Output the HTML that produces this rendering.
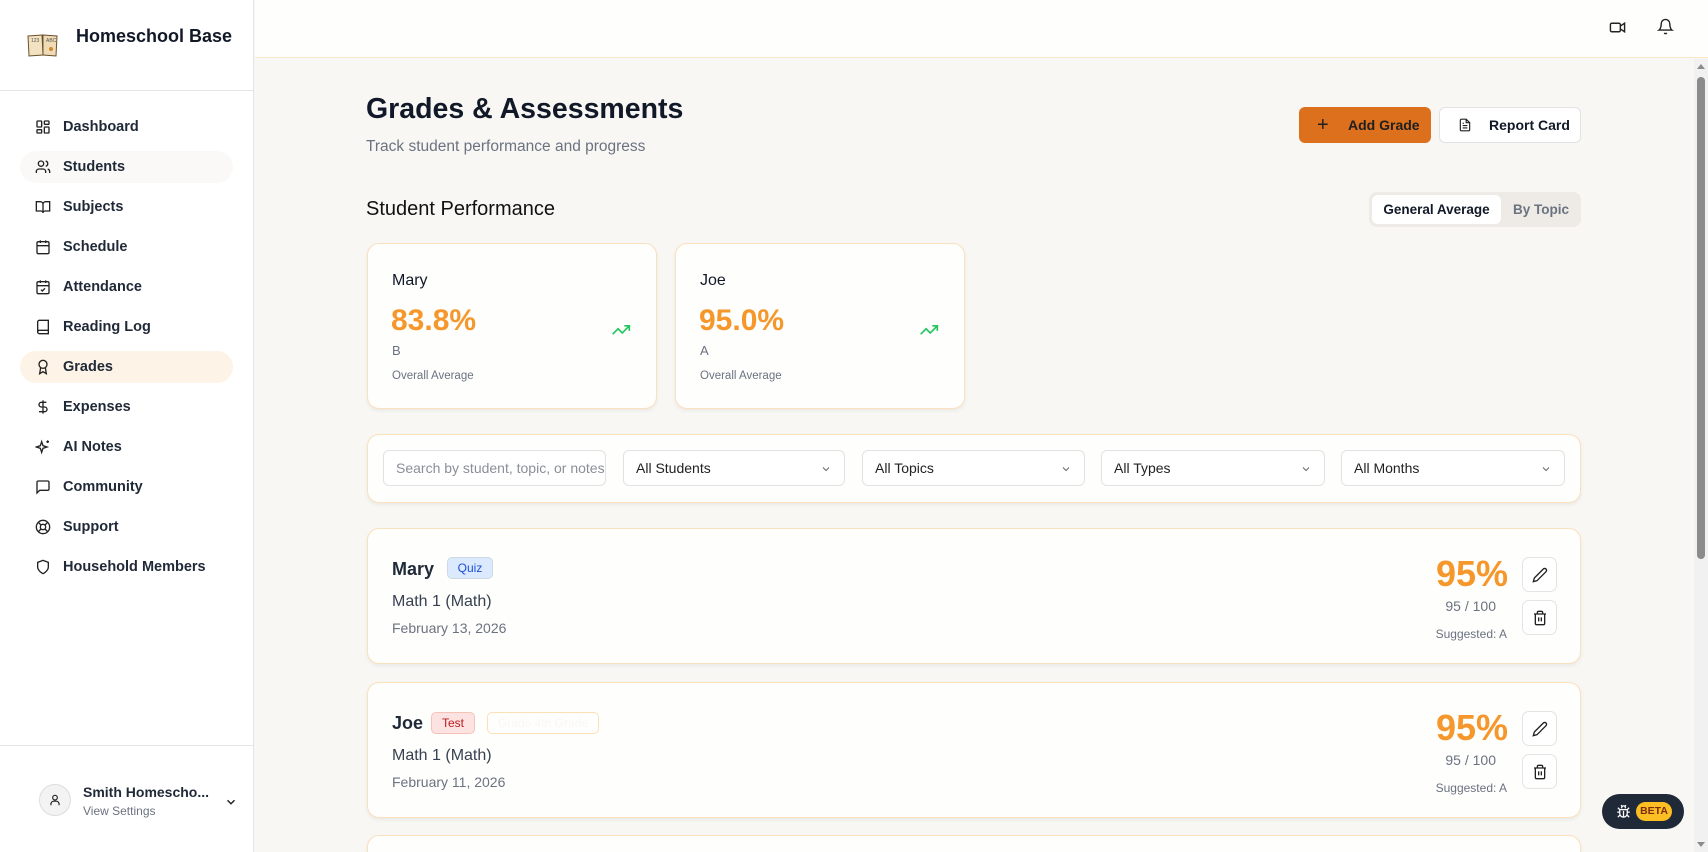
<!DOCTYPE html>
<html style="width:1708px;height:852px;overflow:hidden"><head><meta charset="utf-8"><style>
*{box-sizing:border-box;margin:0;padding:0}
body{width:1708px;height:852px;overflow:hidden;font-family:"Liberation Sans",sans-serif;background:#f8f7f4;color:#111827}
#w{position:relative;width:1708px;height:852px;overflow:hidden}
.abs{position:absolute}
.sb{left:0;top:0;width:254px;height:852px;background:#fff;border-right:1px solid #e5e5e5}
.nav{position:absolute;left:20px;width:213px;height:32px;border-radius:16px;display:flex;align-items:center;font-size:14.5px;font-weight:bold;color:#1f2937}
.nav svg{position:absolute;left:15px;width:16px;height:16px}
.nav span{position:absolute;left:43px}
.card{position:absolute;background:#fefefc;border:1px solid #fbe0bd;border-radius:12px;box-shadow:0 2px 4px rgba(0,0,0,.06)}
.sel{position:absolute;top:450px;height:36px;border:1px solid #e2e2e2;border-radius:6px;background:#fff;font-size:14px;color:#222;padding-left:12px;line-height:34px}
.sel svg{position:absolute;right:12px;top:12px}
.ib{position:absolute;width:35px;height:35px;border:1px solid #e4e4e4;border-radius:7px;background:#fff}
.ib svg{position:absolute;left:9px;top:9px}
</style></head><body><div id="w">
<div class="abs sb">
  <svg class="abs" style="left:26px;top:32px" width="34" height="26" viewBox="0 0 34 26"><path d="M2 4 L16 3 L17 23 L3 24Z" fill="#f3e2c0" stroke="#6b4f2a"/><path d="M17 3 L31 4 L30 24 L17 23Z" fill="#efdcb6" stroke="#6b4f2a"/><text x="5" y="10" font-size="5" fill="#555">123</text><text x="20" y="10" font-size="5" fill="#555">ABC</text><circle cx="25" cy="17" r="2" fill="#d08a2a"/></svg>
  <div class="abs" style="left:76px;top:26px;font-size:18px;font-weight:bold">Homeschool Base</div>
  <div class="abs" style="left:0;top:90px;width:254px;border-top:1px solid #e5e5e5"></div>
  <div class="nav" style="top:111px"><svg viewBox="0 0 24 24" fill="none" stroke="#222" stroke-width="2"><rect x="3" y="3" width="7" height="9" rx="1"/><rect x="14" y="3" width="7" height="5" rx="1"/><rect x="14" y="12" width="7" height="9" rx="1"/><rect x="3" y="16" width="7" height="5" rx="1"/></svg><span>Dashboard</span></div>
  <div class="nav" style="top:151px;background:#faf9f7"><svg viewBox="0 0 24 24" fill="none" stroke="#222" stroke-width="2"><circle cx="9" cy="7" r="4"/><path d="M2 21v-2a4 4 0 0 1 4-4h6a4 4 0 0 1 4 4v2M16 3.1a4 4 0 0 1 0 7.8M22 21v-2a4 4 0 0 0-3-3.9"/></svg><span>Students</span></div>
  <div class="nav" style="top:191px"><svg viewBox="0 0 24 24" fill="none" stroke="#222" stroke-width="2"><path d="M2 4h6a4 4 0 0 1 4 4v13a3 3 0 0 0-3-3H2zM22 4h-6a4 4 0 0 0-4 4v13a3 3 0 0 1 3-3h7z"/></svg><span>Subjects</span></div>
  <div class="nav" style="top:231px"><svg viewBox="0 0 24 24" fill="none" stroke="#222" stroke-width="2"><rect x="3" y="4" width="18" height="18" rx="2"/><path d="M16 2v4M8 2v4M3 10h18"/></svg><span>Schedule</span></div>
  <div class="nav" style="top:271px"><svg viewBox="0 0 24 24" fill="none" stroke="#222" stroke-width="2"><rect x="3" y="4" width="18" height="18" rx="2"/><path d="M16 2v4M8 2v4M3 10h18M9 16l2 2 4-4"/></svg><span>Attendance</span></div>
  <div class="nav" style="top:311px"><svg viewBox="0 0 24 24" fill="none" stroke="#222" stroke-width="2"><path d="M4 19.5v-15A2.5 2.5 0 0 1 6.5 2H20v20H6.5a2.5 2.5 0 0 1 0-5H20"/></svg><span>Reading Log</span></div>
  <div class="nav" style="top:351px;background:#fdf3e7"><svg viewBox="0 0 24 24" fill="none" stroke="#222" stroke-width="2"><circle cx="12" cy="8" r="6"/><path d="M15.5 13l1.5 9-5-3-5 3 1.5-9"/></svg><span>Grades</span></div>
  <div class="nav" style="top:391px"><svg viewBox="0 0 24 24" fill="none" stroke="#222" stroke-width="2"><path d="M12 2v20M17 5H9.5a3.5 3.5 0 0 0 0 7h5a3.5 3.5 0 0 1 0 7H6"/></svg><span>Expenses</span></div>
  <div class="nav" style="top:431px"><svg viewBox="0 0 24 24" fill="none" stroke="#222" stroke-width="2"><path d="M10 4l2 6 6 2-6 2-2 6-2-6-6-2 6-2zM19 2v4M17 4h4"/></svg><span>AI Notes</span></div>
  <div class="nav" style="top:471px"><svg viewBox="0 0 24 24" fill="none" stroke="#222" stroke-width="2"><path d="M21 15a2 2 0 0 1-2 2H7l-4 4V5a2 2 0 0 1 2-2h14a2 2 0 0 1 2 2z"/></svg><span>Community</span></div>
  <div class="nav" style="top:511px"><svg viewBox="0 0 24 24" fill="none" stroke="#222" stroke-width="2"><circle cx="12" cy="12" r="10"/><circle cx="12" cy="12" r="4"/><path d="M4.9 4.9l4.3 4.3M14.8 14.8l4.3 4.3M14.8 9.2l4.3-4.3M4.9 19.1l4.3-4.3"/></svg><span>Support</span></div>
  <div class="nav" style="top:551px"><svg viewBox="0 0 24 24" fill="none" stroke="#222" stroke-width="2"><path d="M12 22s8-4 8-10V5l-8-3-8 3v7c0 6 8 10 8 10z"/></svg><span>Household Members</span></div>
  <div class="abs" style="left:0;top:745px;width:254px;border-top:1px solid #e5e5e5"></div>
  <div class="abs" style="left:39px;top:784px;width:32px;height:32px;border-radius:50%;background:#f3f3f3;border:1px solid #ddd"><svg style="position:absolute;left:8px;top:8px" width="14" height="14" viewBox="0 0 24 24" fill="none" stroke="#222" stroke-width="2"><circle cx="12" cy="8" r="4"/><path d="M5 21v-2a5 5 0 0 1 5-5h4a5 5 0 0 1 5 5v2"/></svg></div>
  <div class="abs" style="left:83px;top:784px;font-size:14px;font-weight:bold;color:#1f2937">Smith Homescho...</div>
  <div class="abs" style="left:83px;top:804px;font-size:12px;color:#6b7280">View Settings</div>
  <svg class="abs" style="left:224px;top:795px" width="14" height="14" viewBox="0 0 24 24" fill="none" stroke="#222" stroke-width="2.5"><path d="M6 9l6 6 6-6"/></svg>
</div>
<div class="abs" style="left:255px;top:0;width:1453px;height:58px;background:#fefefd;border-bottom:1px solid #fde6c8"></div>
<svg class="abs" style="left:1609px;top:19px" width="17" height="17" viewBox="0 0 24 24" fill="none" stroke="#222" stroke-width="2"><rect x="2" y="6" width="14" height="12" rx="2"/><path d="M16 10l6-4v12l-6-4"/></svg>
<svg class="abs" style="left:1657px;top:18px" width="17" height="17" viewBox="0 0 24 24" fill="none" stroke="#222" stroke-width="2"><path d="M6 8a6 6 0 0 1 12 0c0 7 3 9 3 9H3s3-2 3-9M10.3 21a1.9 1.9 0 0 0 3.4 0"/></svg>

<div class="abs" style="left:366px;top:93px;font-size:28.5px;font-weight:bold">Grades &amp; Assessments</div>
<div class="abs" style="left:366px;top:138px;font-size:15.5px;color:#6b7280">Track student performance and progress</div>
<div class="abs" style="left:1299px;top:107px;width:132px;height:36px;background:#dc701d;border-radius:6px;font-size:14px;font-weight:bold;color:#1f1f1f;line-height:36px"><span style="position:absolute;left:18px;font-size:20px;font-weight:normal">+</span><span style="position:absolute;left:49px">Add Grade</span></div>
<div class="abs" style="left:1439px;top:107px;width:142px;height:36px;background:#fff;border:1px solid #e2e2e2;border-radius:6px;font-size:14px;font-weight:bold;line-height:34px"><svg style="position:absolute;left:18px;top:10px" width="14" height="14" viewBox="0 0 24 24" fill="none" stroke="#222" stroke-width="2"><path d="M14 2H6a2 2 0 0 0-2 2v16a2 2 0 0 0 2 2h12a2 2 0 0 0 2-2V8zM14 2v6h6M8 13h8M8 17h8M8 9h2"/></svg><span style="position:absolute;left:49px">Report Card</span></div>
<div class="abs" style="left:366px;top:198px;font-size:20px;color:#111">Student Performance</div>
<div class="abs" style="left:1369px;top:192px;width:212px;height:35px;background:#eeebe6;border-radius:8px"><div class="abs" style="left:3px;top:3px;width:129px;height:29px;background:#fff;border-radius:6px;font-size:13.5px;font-weight:bold;text-align:center;line-height:29px">General Average</div><div class="abs" style="left:144px;top:3px;line-height:29px;font-size:13.5px;font-weight:bold;color:#6b7280">By Topic</div></div>

<div class="card" style="left:367px;top:243px;width:290px;height:166px">
  <div class="abs" style="left:24px;top:28px;font-size:16px">Mary</div>
  <div class="abs" style="left:23px;top:60px;font-size:30px;font-weight:bold;color:#f6972c">83.8%</div>
  <div class="abs" style="left:24px;top:99px;font-size:13px;color:#6b7280">B</div>
  <div class="abs" style="left:24px;top:126px;font-size:11.5px;color:#6b7280">Overall Average</div>
  <svg class="abs" style="left:241px;top:76px" width="24" height="20" viewBox="0 0 24 24" fill="none" stroke="#22c55e" stroke-width="2"><path d="M22 7l-8.5 8.5-5-5L2 17M16 7h6v6"/></svg>
</div>
<div class="card" style="left:675px;top:243px;width:290px;height:166px">
  <div class="abs" style="left:24px;top:28px;font-size:16px">Joe</div>
  <div class="abs" style="left:23px;top:60px;font-size:30px;font-weight:bold;color:#f6972c">95.0%</div>
  <div class="abs" style="left:24px;top:99px;font-size:13px;color:#6b7280">A</div>
  <div class="abs" style="left:24px;top:126px;font-size:11.5px;color:#6b7280">Overall Average</div>
  <svg class="abs" style="left:241px;top:76px" width="24" height="20" viewBox="0 0 24 24" fill="none" stroke="#22c55e" stroke-width="2"><path d="M22 7l-8.5 8.5-5-5L2 17M16 7h6v6"/></svg>
</div>

<div class="card" style="left:367px;top:434px;width:1214px;height:69px"></div>
<div class="sel" style="left:383px;width:223px;color:#8a8f98;overflow:hidden;white-space:nowrap">Search by student, topic, or notes</div>
<div class="sel" style="left:623px;width:222px">All Students<svg width="12" height="12" viewBox="0 0 24 24" fill="none" stroke="#666" stroke-width="2"><path d="M6 9l6 6 6-6"/></svg></div>
<div class="sel" style="left:862px;width:223px">All Topics<svg width="12" height="12" viewBox="0 0 24 24" fill="none" stroke="#666" stroke-width="2"><path d="M6 9l6 6 6-6"/></svg></div>
<div class="sel" style="left:1101px;width:224px">All Types<svg width="12" height="12" viewBox="0 0 24 24" fill="none" stroke="#666" stroke-width="2"><path d="M6 9l6 6 6-6"/></svg></div>
<div class="sel" style="left:1341px;width:224px">All Months<svg width="12" height="12" viewBox="0 0 24 24" fill="none" stroke="#666" stroke-width="2"><path d="M6 9l6 6 6-6"/></svg></div>

<div class="card" style="left:367px;top:528px;width:1214px;height:136px">
  <div class="abs" style="left:24px;top:30px;font-size:18px;font-weight:bold;color:#1f2937">Mary</div>
  <div class="abs" style="left:79px;top:28px;width:46px;height:22px;background:#dbeafe;border:1px solid #cfd8e0;border-radius:5px;font-size:12px;color:#1d4ed8;text-align:center;line-height:20px">Quiz</div>
  <div class="abs" style="left:24px;top:64px;font-size:16px;color:#374151">Math 1 (Math)</div>
  <div class="abs" style="left:24px;top:91px;font-size:14px;color:#6b7280">February 13, 2026</div>
  <div class="abs" style="right:72px;top:24px;font-size:36px;font-weight:bold;color:#f6972c">95%</div>
  <div class="abs" style="right:84px;top:69px;font-size:14px;color:#6b7280">95 / 100</div>
  <div class="abs" style="right:73px;top:98px;font-size:12px;color:#6b7280">Suggested: A</div>
  <div class="ib" style="left:1154px;top:28px"><svg width="16" height="16" viewBox="0 0 24 24" fill="none" stroke="#222" stroke-width="2"><path d="M17 3a2.8 2.8 0 0 1 4 4L7.5 20.5 2 22l1.5-5.5z"/></svg></div>
  <div class="ib" style="left:1154px;top:71px"><svg width="16" height="16" viewBox="0 0 24 24" fill="none" stroke="#222" stroke-width="2"><path d="M3 6h18M19 6v14a2 2 0 0 1-2 2H7a2 2 0 0 1-2-2V6M8 6V4a2 2 0 0 1 2-2h4a2 2 0 0 1 2 2v2M10 11v6M14 11v6"/></svg></div>
</div>
<div class="card" style="left:367px;top:682px;width:1214px;height:136px">
  <div class="abs" style="left:24px;top:30px;font-size:18px;font-weight:bold;color:#1f2937">Joe</div>
  <div class="abs" style="left:63px;top:29px;width:44px;height:22px;background:#fde2e2;border:1px solid #f5c2b8;border-radius:5px;font-size:12px;color:#b91c1c;text-align:center;line-height:20px">Test</div>
  <div class="abs" style="left:119px;top:29px;width:112px;height:22px;border:1px solid #fde0b8;border-radius:5px;font-size:12px;color:#f9f7f2;text-align:center;line-height:20px">Grade 4th Grade</div>
  <div class="abs" style="left:24px;top:64px;font-size:16px;color:#374151">Math 1 (Math)</div>
  <div class="abs" style="left:24px;top:91px;font-size:14px;color:#6b7280">February 11, 2026</div>
  <div class="abs" style="right:72px;top:24px;font-size:36px;font-weight:bold;color:#f6972c">95%</div>
  <div class="abs" style="right:84px;top:69px;font-size:14px;color:#6b7280">95 / 100</div>
  <div class="abs" style="right:73px;top:98px;font-size:12px;color:#6b7280">Suggested: A</div>
  <div class="ib" style="left:1154px;top:28px"><svg width="16" height="16" viewBox="0 0 24 24" fill="none" stroke="#222" stroke-width="2"><path d="M17 3a2.8 2.8 0 0 1 4 4L7.5 20.5 2 22l1.5-5.5z"/></svg></div>
  <div class="ib" style="left:1154px;top:71px"><svg width="16" height="16" viewBox="0 0 24 24" fill="none" stroke="#222" stroke-width="2"><path d="M3 6h18M19 6v14a2 2 0 0 1-2 2H7a2 2 0 0 1-2-2V6M8 6V4a2 2 0 0 1 2-2h4a2 2 0 0 1 2 2v2M10 11v6M14 11v6"/></svg></div>
</div>
<div class="card" style="left:367px;top:835px;width:1214px;height:40px"></div>

<div class="abs" style="left:1694px;top:59px;width:14px;height:793px;background:#f1f1f1"></div>
<div class="abs" style="left:1697px;top:64px;width:0;height:0;border-left:4px solid transparent;border-right:4px solid transparent;border-bottom:5px solid #8b8b8b"></div>
<div class="abs" style="left:1697px;top:77px;width:8px;height:482px;background:#8b8b8b;border-radius:4px"></div>
<div class="abs" style="left:1697px;top:842px;width:0;height:0;border-left:4px solid transparent;border-right:4px solid transparent;border-top:5px solid #8b8b8b"></div>

<div class="abs" style="left:1602px;top:794px;width:82px;height:35px;background:#1f2937;border-radius:18px">
  <svg class="abs" style="left:14px;top:10px" width="15" height="15" viewBox="0 0 24 24" fill="none" stroke="#fff" stroke-width="2"><path d="M8 2l2 2M16 2l-2 2M9 7V6a3 3 0 0 1 6 0v1M12 20v-9M6 9h12v6a6 6 0 0 1-12 0zM6 13H2M22 13h-4M3 21l3-3M21 21l-3-3M3 6l3 3M21 6l-3 3"/></svg>
  <div class="abs" style="left:34px;top:8px;width:36px;height:19px;background:#fbbf24;border-radius:10px;font-size:10.5px;font-weight:bold;color:#7c2d12;text-align:center;line-height:19px">BETA</div>
</div>
</div></body></html>
